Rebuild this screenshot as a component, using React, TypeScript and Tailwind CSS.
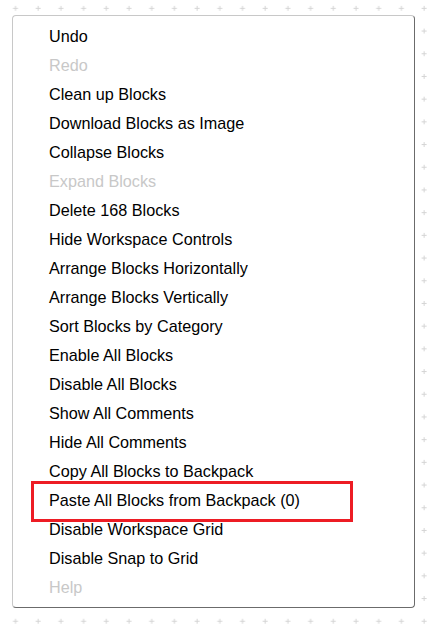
import React from "react"

const items: { label: string; disabled?: boolean }[] = [
  { label: "Undo" },
  { label: "Redo", disabled: true },
  { label: "Clean up Blocks" },
  { label: "Download Blocks as Image" },
  { label: "Collapse Blocks" },
  { label: "Expand Blocks", disabled: true },
  { label: "Delete 168 Blocks" },
  { label: "Hide Workspace Controls" },
  { label: "Arrange Blocks Horizontally" },
  { label: "Arrange Blocks Vertically" },
  { label: "Sort Blocks by Category" },
  { label: "Enable All Blocks" },
  { label: "Disable All Blocks" },
  { label: "Show All Comments" },
  { label: "Hide All Comments" },
  { label: "Copy All Blocks to Backpack" },
  { label: "Paste All Blocks from Backpack (0)" },
  { label: "Disable Workspace Grid" },
  { label: "Disable Snap to Grid" },
  { label: "Help", disabled: true },
]

function GridBackground() {
  return (
    <svg className="absolute inset-0 w-full h-full" aria-hidden="true">
      <defs>
        <pattern id="grid" x="4.5" y="-3" width="22.7" height="22.7" patternUnits="userSpaceOnUse">
          <path d="M8.5 11.4h5M11 8.9v5" stroke="#d4d4d4" strokeWidth="1" />
        </pattern>
      </defs>
      <rect width="100%" height="100%" fill="url(#grid)" />
    </svg>
  )
}

export default function App() {
  return (
    <div className="relative w-[434px] h-[630px] bg-white overflow-hidden font-['Liberation_Sans',Arial,sans-serif]">
      <GridBackground />
      <div className="relative pt-[15px] pl-[12px]">
        <div className="w-[403px] h-[593px] bg-white rounded-[4px] border border-t-[#c8c8c8] border-l-[#c8c8c8] border-r-[#6b6b6b] border-b-[#6b6b6b] pt-[6px]">
          <ul>
            {items.map((it) => (
              <li
                key={it.label}
                className={`h-[29px] flex items-center pl-[36px] text-[16.2px] leading-none ${
                  it.disabled ? "text-[#c8c8c8]" : "text-black"
                }`}
              >
                {it.label}
              </li>
            ))}
          </ul>
        </div>
      </div>
      <div className="absolute left-[31px] top-[481px] w-[322px] h-[41px] border-[3px] border-[#ed1c24]" />
    </div>
  )
}
